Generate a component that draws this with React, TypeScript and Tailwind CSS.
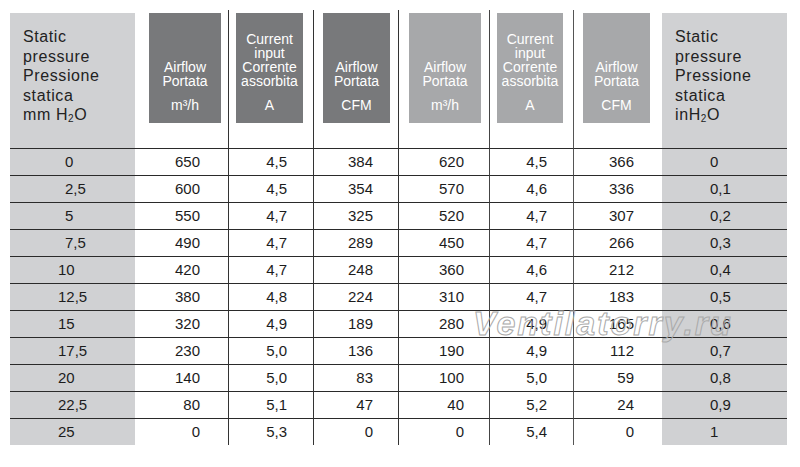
const rows: string[][] = [
  ["0", "650", "4,5", "384", "620", "4,5", "366", "0"],
  ["2,5", "600", "4,5", "354", "570", "4,6", "336", "0,1"],
  ["5", "550", "4,7", "325", "520", "4,7", "307", "0,2"],
  ["7,5", "490", "4,7", "289", "450", "4,7", "266", "0,3"],
  ["10", "420", "4,7", "248", "360", "4,6", "212", "0,4"],
  ["12,5", "380", "4,8", "224", "310", "4,7", "183", "0,5"],
  ["15", "320", "4,9", "189", "280", "4,9", "165", "0,6"],
  ["17,5", "230", "5,0", "136", "190", "4,9", "112", "0,7"],
  ["20", "140", "5,0", "83", "100", "5,0", "59", "0,8"],
  ["22,5", "80", "5,1", "47", "40", "5,2", "24", "0,9"],
  ["25", "0", "5,3", "0", "0", "5,4", "0", "1"],
];

// per-column cell classes (data rows)
const cellCls = [
  "bg-[#d0d1d3] text-left",
  "text-right pr-[28px]",
  "text-right pr-[26px] border-l border-l-[#333]",
  "text-right pr-[25px] border-l border-l-[#333]",
  "text-right pr-[25px] border-l border-l-[#333]",
  "text-right pr-[26px] border-l border-l-[#444]",
  "text-right pr-[28px] border-l border-l-[#555]",
  "bg-[#d0d1d3] text-left pl-[48px]",
];

function PressureHead({ unit }: { unit: "mm" | "in" }) {
  return (
    <div className="pt-[3px] h-full">
      <div className="h-full bg-[#d0d1d3] pl-[13px] pt-[14px] text-[16px] leading-[19.5px] tracking-[0.6px] text-[#222]">
        <div>Static</div>
        <div>pressure</div>
        <div>Pressione</div>
        <div>statica</div>
        {unit === "mm" ? (
          <div>
            mm H<sub className="text-[10px] relative top-[2px]">2</sub>O
          </div>
        ) : (
          <div>
            inH<sub className="text-[10px] relative top-[2px]">2</sub>O
          </div>
        )}
      </div>
    </div>
  );
}

function HeadBox({
  lines,
  unit,
  box,
}: {
  lines: string[];
  unit: React.ReactNode;
  box: string;
}) {
  return (
    <div
      className={`mt-[3px] h-[110px] flex flex-col justify-end items-center pb-[11px] text-white text-[14px] leading-[14px] text-center ${box}`}
    >
      {lines.map((l) => (
        <div key={l}>{l}</div>
      ))}
      <div className="mt-[10px]">{unit}</div>
    </div>
  );
}

export default function App() {
  return (
    <div className="w-[800px] h-[467px] bg-white font-['Liberation_Sans',Arial,sans-serif] text-[#1c1c1c]">
      <div className="relative pl-[10px] pt-[10px]">
        <div className="grid w-[777px] grid-cols-[125px_93px_85px_85px_91px_84px_89px_125px]">
          {/* header row */}
          <div className="h-[138px]">
            <PressureHead unit="mm" />
          </div>
          <div className="h-[138px] pl-[14px]">
            <HeadBox
              box="w-[72px] bg-[#78797b]"
              lines={["Airflow", "Portata"]}
              unit={<span>m³/h</span>}
            />
          </div>
          <div className="h-[138px] pl-[7px] border-l border-l-[#333]">
            <HeadBox
              box="w-[67px] bg-[#78797b]"
              lines={["Current", "input", "Corrente", "assorbita"]}
              unit="A"
            />
          </div>
          <div className="h-[138px] pl-[9px] border-l border-l-[#333]">
            <HeadBox
              box="w-[67px] bg-[#78797b]"
              lines={["Airflow", "Portata"]}
              unit="CFM"
            />
          </div>
          <div className="h-[138px] pl-[10px] border-l border-l-[#333]">
            <HeadBox
              box="w-[72px] bg-[#a7a8aa]"
              lines={["Airflow", "Portata"]}
              unit={<span>m³/h</span>}
            />
          </div>
          <div className="h-[138px] pl-[7px] border-l border-l-[#444]">
            <HeadBox
              box="w-[66px] bg-[#a7a8aa]"
              lines={["Current", "input", "Corrente", "assorbita"]}
              unit="A"
            />
          </div>
          <div className="h-[138px] pl-[9px] border-l border-l-[#555]">
            <HeadBox
              box="w-[67px] bg-[#a7a8aa]"
              lines={["Airflow", "Portata"]}
              unit="CFM"
            />
          </div>
          <div className="h-[138px]">
            <PressureHead unit="in" />
          </div>

          {/* data rows */}
          {rows.map((r, i) =>
            r.map((v, j) => (
              <div
                key={`${i}-${j}`}
                className={`h-[27px] border-t border-t-[#2a2a2a] text-[15px] leading-[26px] ${cellCls[j]} ${
                  j === 0 ? (i < 4 ? "pl-[55px]" : "pl-[48px]") : ""
                }`}
              >
                {v}
              </div>
            ))
          )}
        </div>

        {/* watermark */}
        <div className="absolute left-[473px] top-[306px] text-[34px] leading-[34px] font-bold italic tracking-[2px] text-transparent [-webkit-text-stroke:1px_#a9a9a9] pointer-events-none select-none">
          Ventilatorry.ru
        </div>
      </div>
    </div>
  );
}
